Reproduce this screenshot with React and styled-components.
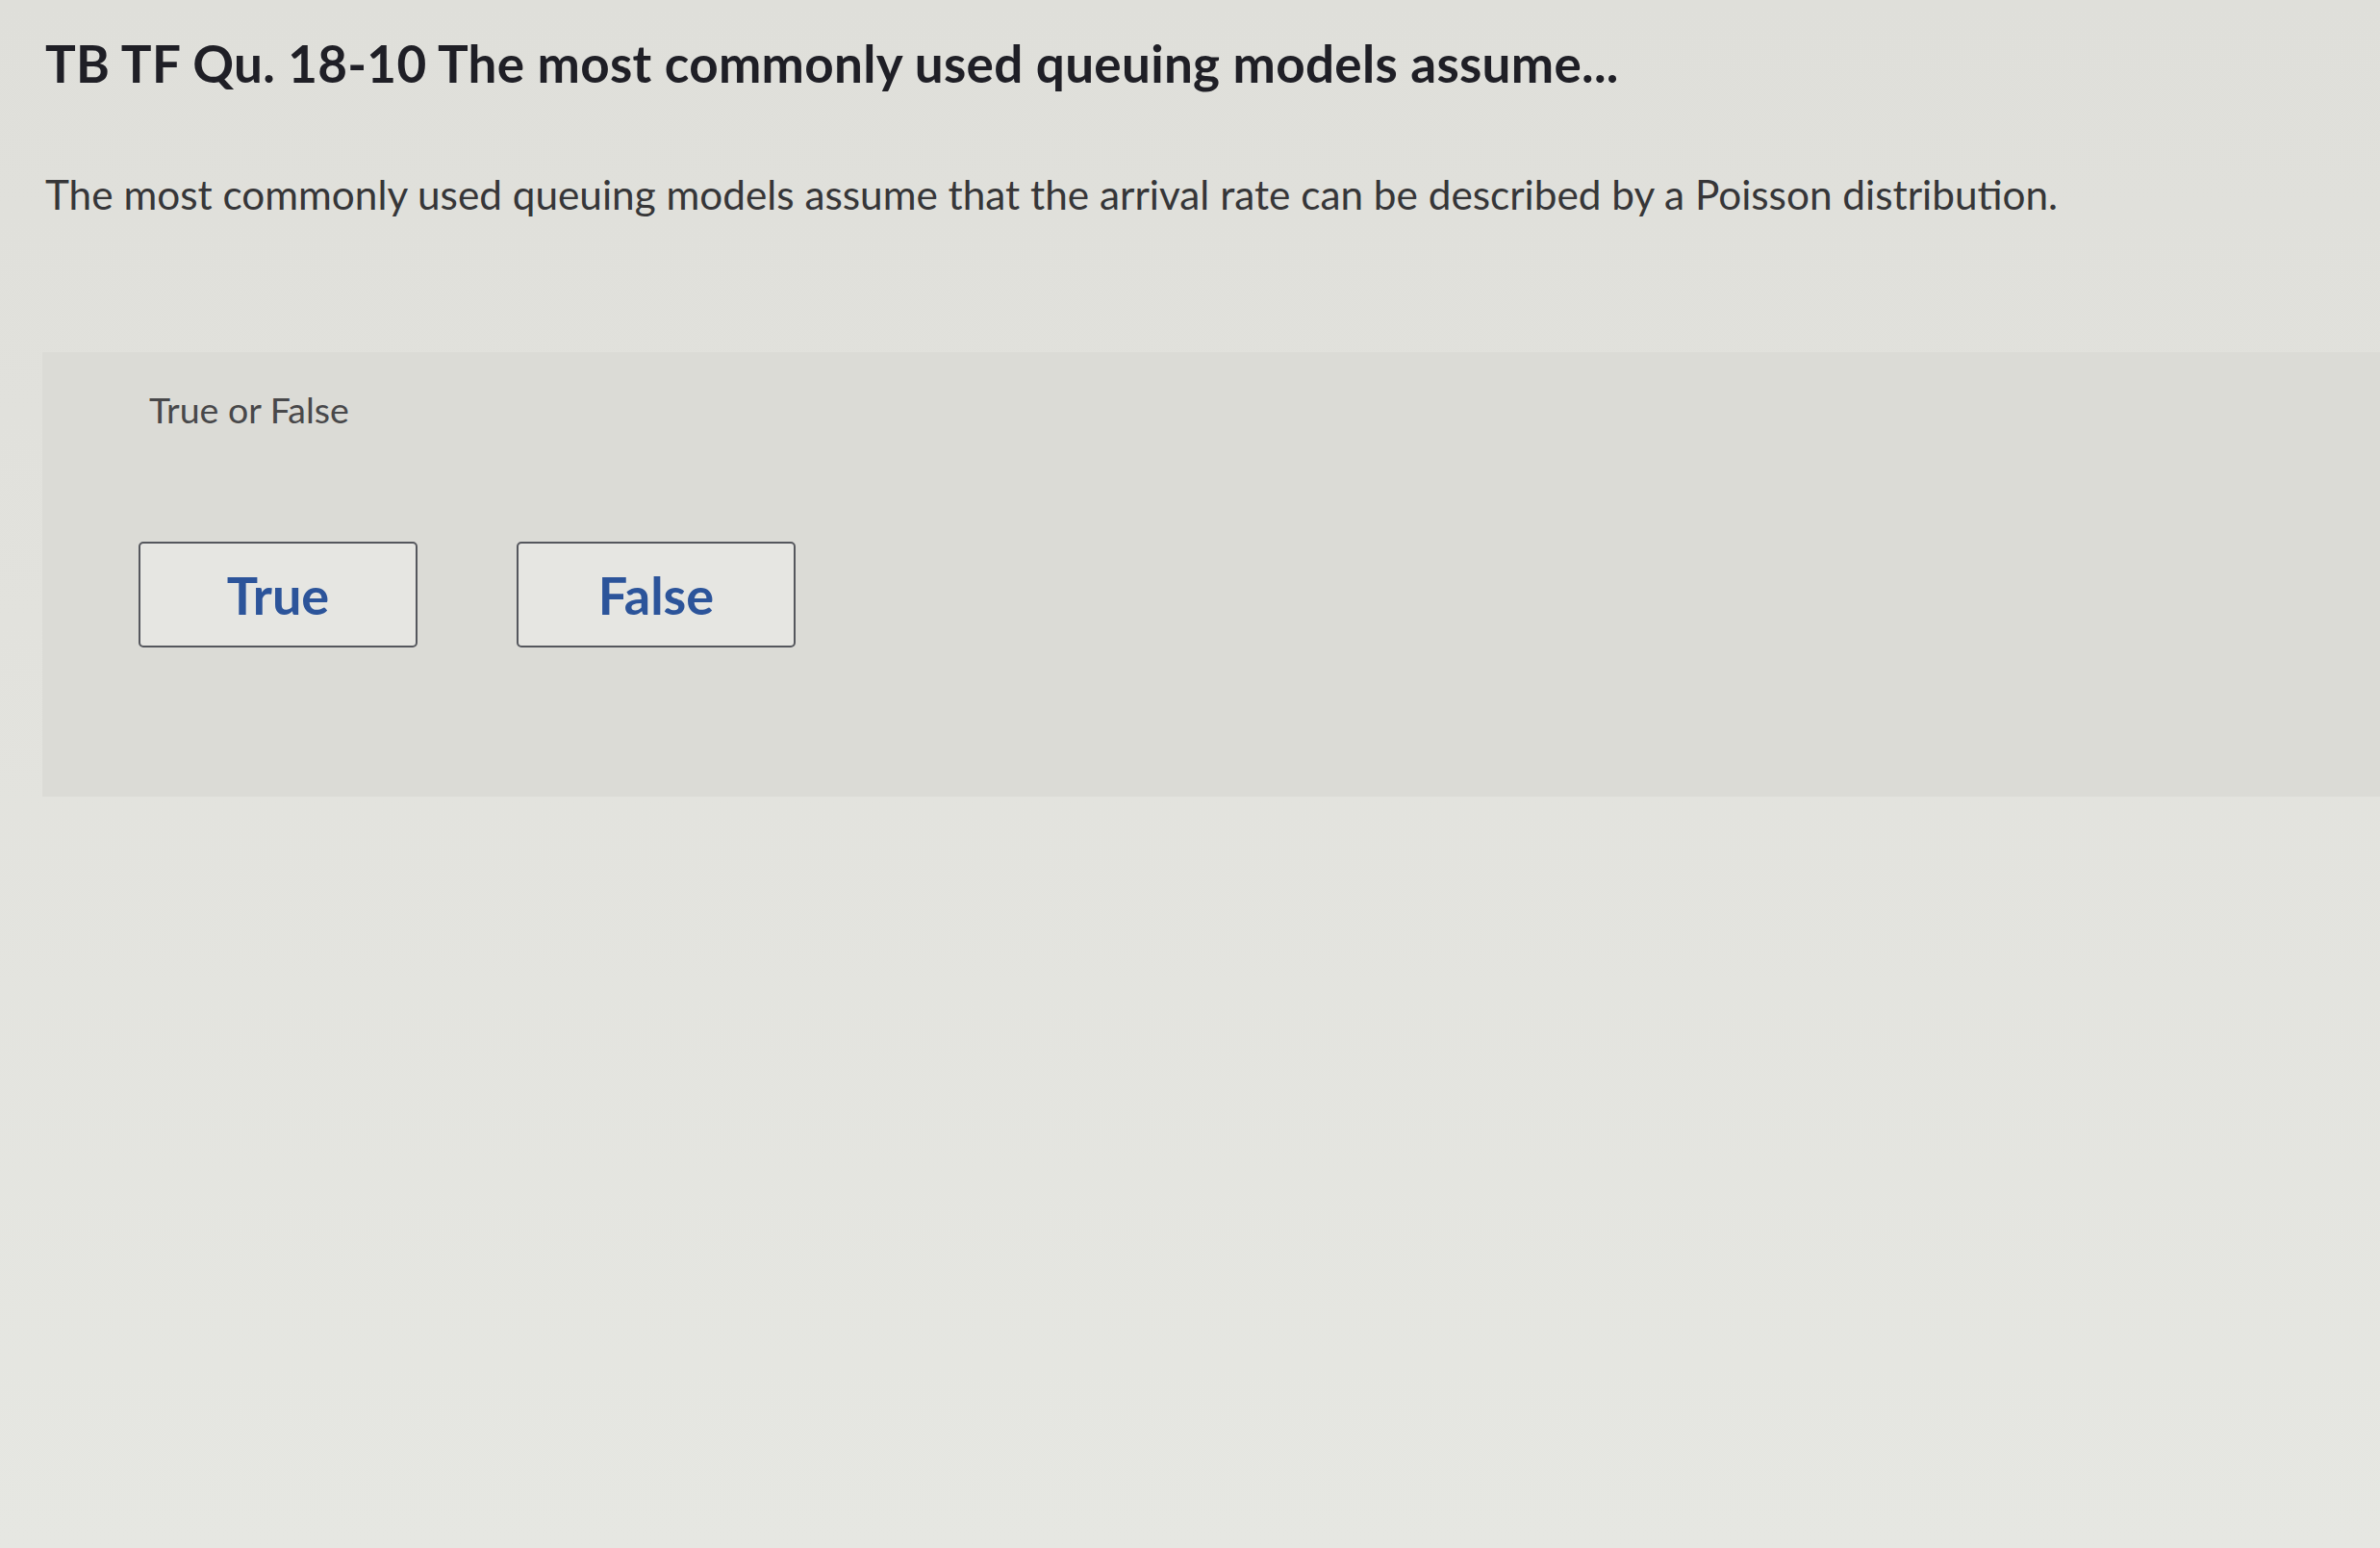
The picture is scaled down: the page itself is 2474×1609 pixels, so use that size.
import React, { useState } from "react";
import styled, { createGlobalStyle } from "styled-components";

const GlobalStyle = createGlobalStyle`
  html, body {
    margin: 0;
    padding: 0;
    background: #e3e3de;
  }
  body {
    font-family: Lato, "Open Sans", "Liberation Sans", sans-serif;
  }
`;

const Page = styled.div`
  min-height: 1609px;
  box-sizing: border-box;
  padding-top: 34px;
  background: linear-gradient(180deg, #dfdfda 0%, #e2e2dd 40%, #e6e7e2 100%);
`;

const Header = styled.div`
  padding-left: 47px;
`;

const Title = styled.h1`
  margin: 0;
  font-size: 53px;
  line-height: 64px;
  font-weight: 700;
  color: #1f1f26;
  letter-spacing: 0.3px;
`;

const Prompt = styled.p`
  margin: 79px 0 0;
  font-size: 42.3px;
  line-height: 50px;
  font-weight: 400;
  color: #363638;
`;

const Panel = styled.section`
  margin: 139px 0 0 44px;
  height: 462px;
  box-sizing: border-box;
  padding: 37px 0 0 111px;
  background: #dbdbd6;
`;

const Label = styled.div`
  font-size: 37.5px;
  line-height: 46px;
  color: #48484a;
`;

const Choices = styled.div`
  display: flex;
  gap: 103px;
  margin: 114px 0 0 -11px;
`;

const Choice = styled.button`
  width: 290px;
  height: 110px;
  box-sizing: border-box;
  border: 2px solid ${(p) => (p.selected ? "#2a5aa8" : "#55575d")};
  border-radius: 5px;
  background: ${(p) => (p.selected ? "#dfe7f3" : "#e6e6e2")};
  font-family: Lato, "Open Sans", "Liberation Sans", sans-serif;
  font-size: 54px;
  font-weight: 700;
  color: #2c549a;
  cursor: pointer;
  padding: 0;
`;

function App() {
  const [answer, setAnswer] = useState(null);

  return (
    <Page>
      <GlobalStyle />
      <Header>
        <Title>TB TF Qu. 18-10 The most commonly used queuing models assume...</Title>
        <Prompt>
          The most commonly used queuing models assume that the arrival rate can be described by a
          Poisson distribution.
        </Prompt>
      </Header>
      <Panel>
        <Label>True or False</Label>
        <Choices>
          {["True", "False"].map((opt) => (
            <Choice key={opt} selected={answer === opt} onClick={() => setAnswer(opt)}>
              {opt}
            </Choice>
          ))}
        </Choices>
      </Panel>
    </Page>
  );
}

export default App;
